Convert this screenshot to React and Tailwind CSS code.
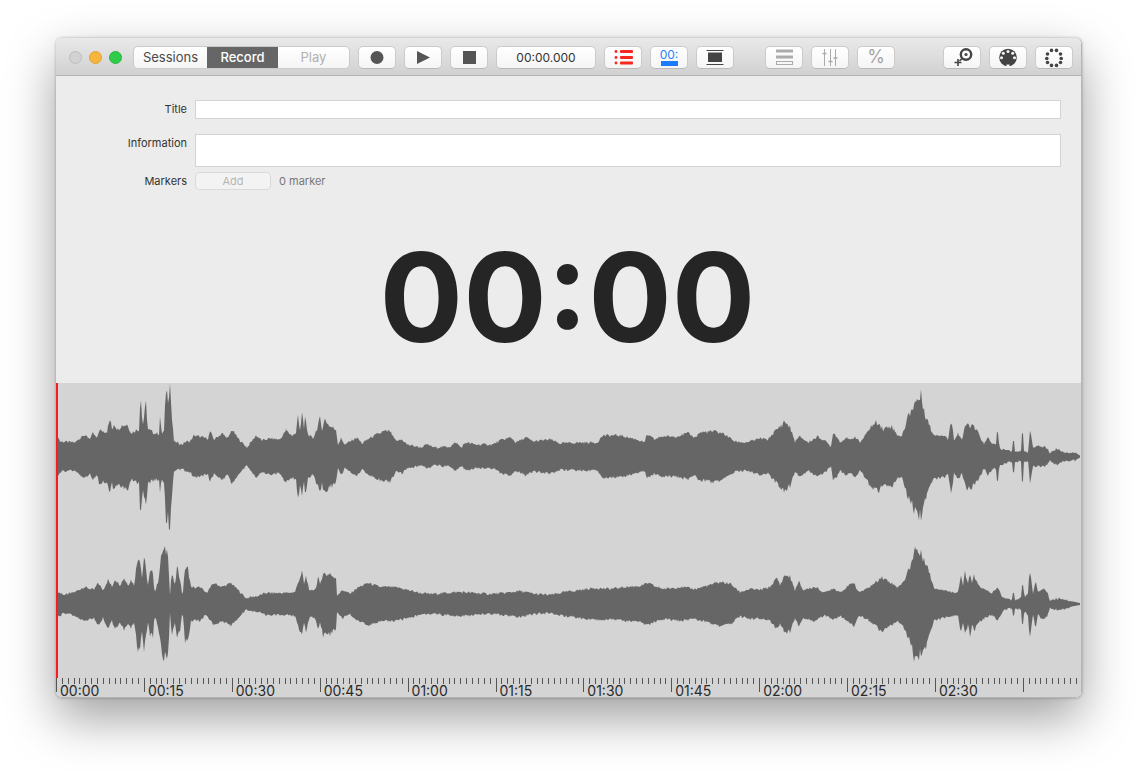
const font = { fontFamily: 'Inter, "Liberation Sans", sans-serif' }

// waveform envelopes, [x inside the window, amplitude in px]
const topTrack = [
  [2,20],[4,15],[19,14],[24,18],[27,22],[34,18],[37,23],[41,18],[43,26],[51,25],[54,37],[56,27],[58,33],[62,27],[65,31],[72,32],[75,23],[79,26],[83,27],[84.5,67],[86.5,30],[90,52],[92,27],[99,23],[103,23],[104,40],[105.5,23],[108,25],[110,68],[112,60],[114,73],[116,37],[118,15],[126,12],[130,15],[134,15],[138,21],[152,18],[154,25],[158,17],[166,23],[172,18],[176,27],[182,18],[191,9],[200,21],[206,16],[214,18],[224,17],[230,26],[236,21],[240,23],[242,42],[244,27],[246,42],[248,27],[249,39],[252,22],[257,18],[261,28],[264,37],[266,28],[269,37],[274,30],[280,27],[282,12],[285,18],[289,12],[294,15],
  [301,19],[306,13],[313,18],[321,22],[328,25],[334,25],[340,15],[346,17],[351,12],[365,9],[371,12],[378,9],[394,10],[400,14],[405,9],[410,14],[419,12],[437,12],[444,16],[455,19],[460,14],[470,19],[477,15],[494,17],[504,13],[524,14],[541,14],[547,21],[564,21],[581,17],[589,14],[590.5,22],[599,17],[605,20],[619,20],[632,23],[639,19],[644,24],[657,25],[664,24],
  [669,22],[679,15],[689,14],[694,15],[704,18],[712,17],[716,22],[726,32],[729,35],[734,29],[739,15],[744,20],[752,14],[762,20],[771,14],[775,10],[777,24],[781,20],[784,14],[790,19],[794,16],[799,20],[804,14],[810,22],[814,29],[822,35],[827,27],[835,31],[841,22],[846,20],[852,40],[859,54],[865,60],[870,40],[877,22],[889,21],[892,17],[895.5,37],[898,17],[902,23],[906,17],[910,32],[917,30],[922,24],[928,12],[932,19],[937,12],[940,12],[941.5,29],[943.5,8],[956,5],[957.5,22],[959,5],[965,5],[966.5,34],[968,5],[972,5],[974,26],[977,10],[989,10],[994,4],[1001,8],[1009,4],[1019,4],[1024,1],
]
const bottomTrack = [
  [2,12],[9,9],[19,12],[28,17],[38,14],[42,21],[47,14],[52,24],[56,17],[59,25],[64,19],[68,26],[72,19],[75,24],[78,19],[82,48],[84,46],[86,26],[88,47],[92,19],[94,31],[97,32],[98.5,11],[102,22],[106,52],[112,53],[114,9],[115.5,31],[119,19],[121,36],[124,26],[126.5,7],[129,36],[132,35],[135,17],[140,16],[144,17],[150,11],[158,21],[166,17],[175,21],[184,12],[190,6],[202,8],[210,11],[232,11],[239,12],[243,24],[246,32],[248,20],[250,27],[254,12],[260,16],[262,27],[264,19],[267,31],[271,29],[274,31],[277,26],[280,27],[281,9],[287,14],[294,10],[301,16],[312,21],[324,17],[334,17],[344,16],[364,11],[374,10],
  [389,11],[404,12],[419,11],[434,10],[449,11],[464,13],[479,10],[494,9],[509,12],[524,14],[539,16],[554,15],[569,17],[584,18],[592,21],[600,17],[609,15],[624,17],[639,15],[654,19],
  [664,22],[675,20],[679,16],[684,12],[694,15],[704,14],[714,17],[721,26],[724,19],[729,29],[734,27],[739,14],[743,22],[747,14],[759,17],[769,11],[777,16],[784,12],[794,19],[798,22],[802,12],[809,14],[819,21],[825,27],[834,22],[841,17],[847,21],[854,37],[859,56],[864,50],[869,45],[874,29],[878,16],[889,14],[894,12],[902,12],[905,29],[907,18],[909,31],[912,20],[914,32],[916,20],[918,28],[922,19],[929,14],[936,11],[942,16],[947,6],[956,4],[957.5,16],[959,4],[965,6],[966.5,25],[968.5,6],[972,12],[973.5,35],[977,11],[979.5,24],[982,11],[987,16],[991,12],[994,4],[1004,6],[1014,3],[1024,1],
]

function envelope(points, x) {
  let i = 0
  while (i < points.length - 2 && points[i + 1][0] < x) i++
  const [x0, a0] = points[i]
  const [x1, a1] = points[i + 1]
  const t = Math.max(0, Math.min(1, (x - x0) / (x1 - x0)))
  return a0 + (a1 - a0) * t
}

function noise(x) {
  const n = Math.sin(x * 12.9898) * 43758.5453
  return n - Math.floor(n) - 0.5
}

function wavePath(points, center) {
  const up = []
  const down = []
  for (let x = 2; x <= 1024; x += 1) {
    const a = envelope(points, x)
    const j = a > 3 ? 2.6 + Math.max(0, a - 20) * 0.3 : 0.2
    up.push(`${x},${(center - a - noise(x) * j).toFixed(1)}`)
    down.push(`${x},${(center + a + noise(x + 0.37) * j).toFixed(1)}`)
  }
  return `M${up.join('L')}L${down.reverse().join('L')}Z`
}

const topPath = wavePath(topTrack, 73.5)
const bottomPath = wavePath(bottomTrack, 221)

const labels = ['00:00', '00:15', '00:30', '00:45', '01:00', '01:15', '01:30', '01:45', '02:00', '02:15', '02:30']
const ticks = Array.from({ length: 176 }, (_, i) => i)

function Btn({ children, className = 'w-[38px]' }) {
  return (
    <div className={`h-[23px] ${className} shrink-0 flex items-center justify-center rounded-[5px] border border-[#cbcbcb] border-b-[#b9b9b9] bg-gradient-to-b from-[#ffffff] to-[#f5f5f5]`}>
      {children}
    </div>
  )
}

function Light({ className }) {
  return <div className={`w-[13px] h-[13px] rounded-full border ${className}`} />
}

function Icon({ children }) {
  return <svg width="36" height="21" viewBox="0 0 36 21" className="block">{children}</svg>
}

function Toolbar() {
  return (
    <div className="h-[38px] shrink-0 flex items-center pl-[13px] pt-[1px] bg-gradient-to-b from-[#e9e9e9] to-[#d1d1d1] border-b border-[#b3b3b3]">
      <div className="flex gap-[7px] w-[64px]">
        <Light className="bg-[#d2d2d2] border-[#bdbdbd]" />
        <Light className="bg-[#f6b53d] border-[#e2a332]" />
        <Light className="bg-[#2fcb4a] border-[#27b53f]" />
      </div>
      <div className="flex h-[23px] w-[217px] text-[13px] rounded-[5px] border border-[#cbcbcb] bg-gradient-to-b from-[#ffffff] to-[#f5f5f5] overflow-hidden">
        <div className="w-[73px] pt-px flex items-center justify-center text-[#4a4a4a]">Sessions</div>
        <div className="w-[71px] -my-px pt-px flex items-center justify-center bg-[#666666] text-white font-medium">Record</div>
        <div className="flex-1 pt-px flex items-center justify-center text-[#b0b0b0]">Play</div>
      </div>
      <div className="flex gap-[8px] ml-[8px]">
        <Btn><Icon><circle cx="18" cy="10.5" r="6.5" fill="#555" /></Icon></Btn>
        <Btn><Icon><path d="M12 4 L25 10.5 L12 17 Z" fill="#555" /></Icon></Btn>
        <Btn><Icon><rect x="12" y="4" width="13" height="13" fill="#555" /></Icon></Btn>
        <Btn className="w-[100px]"><span className="pt-px text-[12px] text-[#333]">00:00.000</span></Btn>
        <Btn>
          <Icon>
            <g fill="#f5271f">
              <circle cx="11" cy="4.5" r="1.4" /><rect x="15" y="3" width="13" height="3" rx="1" />
              <circle cx="11" cy="10.5" r="1.4" /><rect x="15" y="9" width="13" height="3" rx="1" />
              <circle cx="11" cy="16" r="1.4" /><rect x="15" y="14.5" width="13" height="3" rx="1" />
            </g>
          </Icon>
        </Btn>
        <Btn>
          <div className="flex flex-col items-center w-[17px]">
            <span className="text-[12px] leading-[11px] text-[#2b7ffa]">00:</span>
            <div className="w-[17px] h-[5px] mt-[1px] bg-[#1a7bfb]" />
          </div>
        </Btn>
        <Btn>
          <Icon>
            <rect x="9.5" y="3" width="17" height="1" fill="#444" />
            <rect x="11" y="5.5" width="14" height="9.5" fill="#444" />
            <rect x="9.5" y="17" width="17" height="1" fill="#444" />
          </Icon>
        </Btn>
      </div>
      <div className="flex gap-[8px] ml-[31px]">
        <Btn>
          <Icon>
            <rect x="10" y="2.5" width="17" height="3" fill="#ababab" />
            <rect x="10" y="8.5" width="17" height="3" fill="#ababab" />
            <rect x="10.5" y="14.5" width="16" height="3" fill="none" stroke="#ababab" />
          </Icon>
        </Btn>
        <Btn>
          <Icon>
            <g stroke="#ababab" strokeWidth="1">
              <path d="M12.5 2v17M18.5 2v17M23.5 2v17" />
              <path d="M10.5 6.5h4M16.5 14.5h4M21.5 11h4" strokeWidth="1.6" />
            </g>
          </Icon>
        </Btn>
        <Btn><span className="text-[18px] leading-none text-[#a5a5a5]">%</span></Btn>
      </div>
      <div className="flex gap-[8px] ml-[48px]">
        <Btn>
          <Icon>
            <circle cx="22" cy="7.5" r="5.2" fill="none" stroke="#444" strokeWidth="2.4" />
            <circle cx="22" cy="7.5" r="1.6" fill="#444" />
            <path d="M18 11.5L15.5 14" stroke="#444" strokeWidth="1.6" />
            <path d="M10.5 15.5h7M14 12v7" stroke="#444" strokeWidth="1.6" />
          </Icon>
        </Btn>
        <Btn>
          <Icon>
            <circle cx="18" cy="10.5" r="8.8" fill="#444" />
            <g fill="#f5f5f5">
              <circle cx="18" cy="4.5" r="1.5" /><circle cx="13.3" cy="6.3" r="1.5" /><circle cx="22.7" cy="6.3" r="1.5" />
              <circle cx="11.5" cy="10.8" r="1.5" /><circle cx="24.5" cy="10.8" r="1.5" />
              <rect x="16.5" y="17.5" width="3" height="3" />
            </g>
          </Icon>
        </Btn>
        <Btn>
          <Icon>
            <g fill="#444">
              <circle cx="15.5" cy="3.4" r="1.8" /><circle cx="20.5" cy="3.4" r="1.8" />
              <circle cx="11.5" cy="7" r="1.8" /><circle cx="24.5" cy="7" r="1.8" />
              <circle cx="10.8" cy="11.5" r="1.8" /><circle cx="25.2" cy="11.5" r="1.8" />
              <circle cx="11.5" cy="15.5" r="1.8" /><circle cx="24.5" cy="15.5" r="1.8" />
              <circle cx="15.5" cy="18.4" r="1.8" /><circle cx="20.5" cy="18.4" r="1.8" />
            </g>
          </Icon>
        </Btn>
      </div>
    </div>
  )
}

function Form() {
  return (
    <div className="h-[307px] shrink-0 bg-[#ececec] flex flex-col">
      <div className="pt-[24px] grid grid-cols-[131px_866px] gap-x-[8px] text-[11px] text-[#333]">
        <div className="text-right leading-[18px]">Title</div>
        <div className="h-[19px] bg-white border border-[#d3d3d3]" />
        <div className="text-right leading-[18px] mt-[15px]">Information</div>
        <div className="h-[33px] bg-white border border-[#d3d3d3] mt-[15px]" />
        <div className="text-right leading-[18px] mt-[5px]">Markers</div>
        <div className="flex items-center gap-[8px] mt-[5px]">
          <div className="w-[76px] h-[18px] flex items-center justify-center rounded-[4px] border border-[#dadada] bg-[#f3f3f3] text-[#b5b5b5]">Add</div>
          <span className="text-[#777]">0 marker</span>
        </div>
      </div>
      <div className="flex-1 flex items-center justify-center pt-[21px] pr-[2px]">
        <div className="text-[124px] leading-none font-bold text-[#252525]">00:00</div>
      </div>
    </div>
  )
}

function Wave() {
  return (
    <div className="flex-1 bg-[#d4d4d4] flex flex-col min-h-0">
      <svg width="1025" height="295" viewBox="0 0 1025 295" className="block shrink-0">
        <path d={topPath} fill="#666666" />
        <path d={bottomPath} fill="#666666" />
        <rect x="0" y="0" width="2" height="295" fill="#fb1a22" />
      </svg>
      <div className="relative flex-1">
        <svg width="1025" height="20" viewBox="0 0 1025 20" className="absolute left-0 top-0">
          {ticks.map(i => (
            <rect key={i} x={Math.round(i * 5.86)} y="0" width="1" height={i % 15 === 0 ? 14 : 6} fill="#555" />
          ))}
        </svg>
        <div className="flex pl-[4px] pt-[5px] text-[14px] leading-[15px] text-[#2a2a2a]">
          {labels.map(label => (
            <div key={label} className="w-[87.9px] shrink-0">{label}</div>
          ))}
        </div>
      </div>
    </div>
  )
}

export default function App() {
  return (
    <div className="h-[772px] overflow-hidden bg-white pt-[38px] pl-[56px]" style={font}>
      <div className="w-[1026px] h-[660px] flex flex-col overflow-hidden rounded-[6px] border-r border-b border-[#b5b5b5] shadow-[0_20px_50px_rgba(0,0,0,0.38),0_0_3px_rgba(0,0,0,0.3)]">
        <Toolbar />
        <Form />
        <Wave />
      </div>
    </div>
  )
}
